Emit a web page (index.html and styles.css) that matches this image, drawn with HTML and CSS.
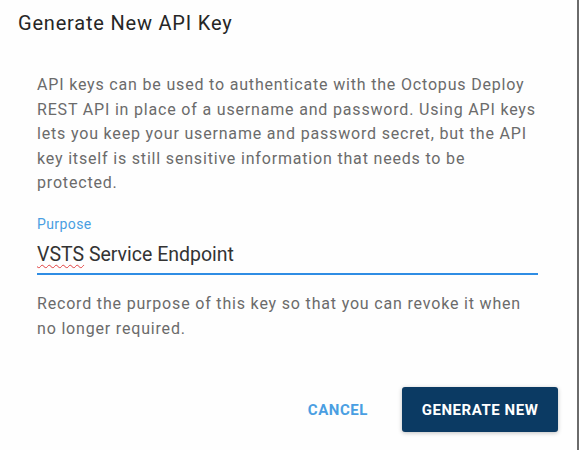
FILE: index.html
```html
<!DOCTYPE html>
<html lang="en">
<head>
    <meta charset="UTF-8">
    <title>Generate New API Key</title>
    <link rel="stylesheet" href="styles.css">
</head>
<body>
    <div class="dialog">
        <h2 class="dialog-title">Generate New API Key</h2>

        <div class="dialog-content">
            <p class="intro">API keys can be used to authenticate with the Octopus Deploy REST API in place of a username and password. Using API keys lets you keep your username and password secret, but the API key itself is still sensitive information that needs to be protected.</p>

            <div class="field">
                <label class="field-label">Purpose</label>
                <div class="field-input"><span class="misspelled">VSTS</span> Service Endpoint</div>
                <p class="field-help">Record the purpose of this key so that you can revoke it when no longer required.</p>
            </div>
        </div>

        <div class="dialog-actions">
            <button class="btn btn-flat">CANCEL</button>
            <button class="btn btn-primary">GENERATE NEW</button>
        </div>
    </div>
</body>
</html>
```

FILE: styles.css
```css
body{
    margin: 0;
    background: #ffffff;
    font-family: Roboto, 'Liberation Sans', sans-serif;
}
.dialog{
    width: 577px;
    height: 450px;
    border-right: 2px solid #6b6b6b;
    background: #fefefe;
    display: flex;
    flex-direction: column;
}
.dialog-title{
    margin: 0;
    padding: 11px 18px 0 18px;
    font-size: 20px;
    font-weight: 400;
    letter-spacing: 0.8px;
    line-height: 24px;
    color: #262626;
}
.dialog-content{
    padding: 38px 36px 0 37px;
}
.intro{
    margin: 0;
    font-size: 16px;
    letter-spacing: 0.82px;
    line-height: 24.5px;
    color: #6b6b6b;
}
.field{
    margin-top: 20px;
    margin-right: 3px;
}
.field-label{
    display: block;
    font-size: 14px;
    letter-spacing: 0.4px;
    line-height: 16px;
    color: #4a9ee2;
}
.field-input{
    margin-top: 11px;
    padding-bottom: 6px;
    font-size: 19.5px;
    line-height: 24px;
    color: #333333;
    border-bottom: 2px solid #2f8de4;
}
.misspelled{
    text-decoration: underline wavy #e04040;
    text-decoration-thickness: 1px;
    text-underline-offset: 3px;
}
.field-help{
    margin: 16px 0 0 0;
    font-size: 16px;
    letter-spacing: 0.82px;
    line-height: 25px;
    color: #6b6b6b;
}
.dialog-actions{
    margin-top: auto;
    padding: 0 19px 18px 0;
    display: flex;
    justify-content: flex-end;
    align-items: center;
    gap: 16px;
}
.btn{
    font-family: Roboto, 'Liberation Sans', sans-serif;
    font-size: 15px;
    font-weight: 700;
    letter-spacing: 0.55px;
    border: none;
    border-radius: 3px;
    height: 45px;
    cursor: pointer;
}
.btn-flat{
    background: none;
    color: #4a9ee2;
    padding: 0 18px;
}
.btn-primary{
    background: #0b3a63;
    color: #ffffff;
    padding: 0 10px;
    width: 156px;
    box-shadow: 0 1px 4px rgba(0, 0, 0, 0.25);
}
```
